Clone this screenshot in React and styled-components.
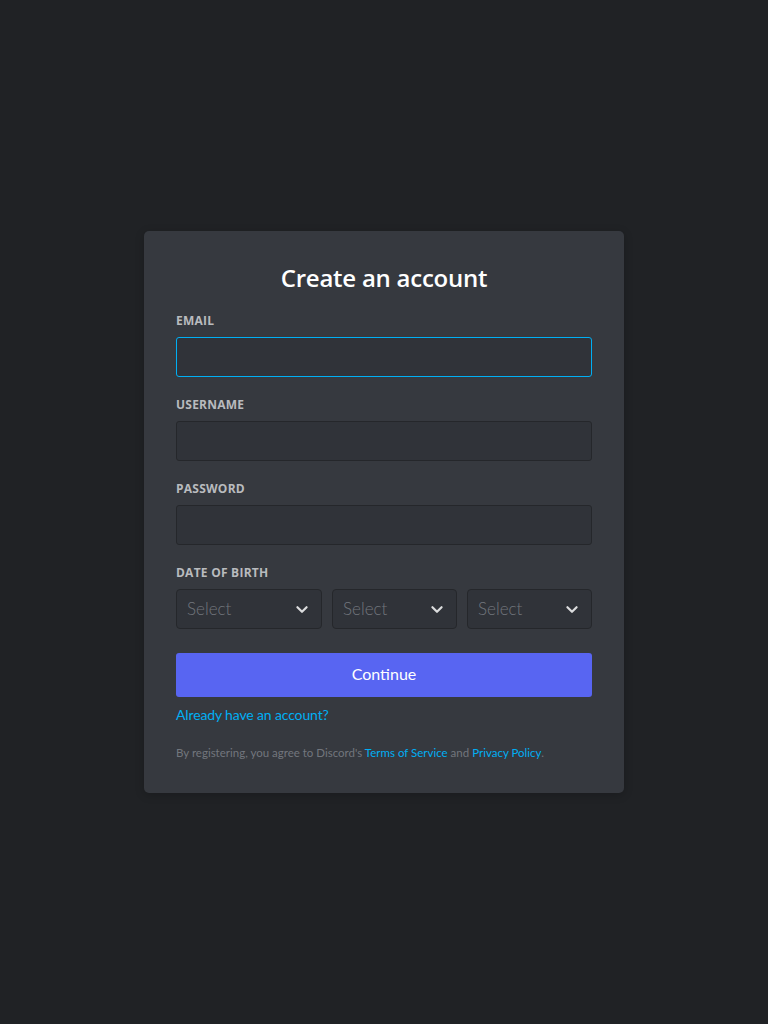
import React from "react";
import styled, { createGlobalStyle } from "styled-components";

const GlobalStyle = createGlobalStyle`
  html, body {
    margin: 0;
    padding: 0;
    background: #202225;
  }
  * {
    box-sizing: border-box;
  }
`;

const Page = styled.main`
  min-height: 100vh;
  display: flex;
  align-items: center;
  justify-content: center;
  background: #202225;
  font-family: Lato, "Open Sans", sans-serif;
`;

const Card = styled.form`
  width: 480px;
  padding: 32px;
  background: #36393f;
  border-radius: 5px;
  box-shadow: 0 2px 10px 0 rgba(0, 0, 0, 0.2);
  display: flex;
  flex-direction: column;
`;

const Title = styled.h1`
  margin: 0;
  font-size: 24px;
  line-height: 30px;
  font-weight: 600;
  color: #ffffff;
  text-align: center;
  font-family: "Open Sans", sans-serif;
  letter-spacing: -0.01em;
`;

const Field = styled.div`
  margin-top: 20px;
  display: flex;
  flex-direction: column;
`;

const Label = styled.label`
  margin-bottom: 8px;
  font-size: 12px;
  line-height: 16px;
  font-weight: 700;
  letter-spacing: 0.02em;
  text-transform: uppercase;
  color: #b9bbbe;
  font-family: "Open Sans", sans-serif;
`;

const Input = styled.input`
  height: 40px;
  width: 100%;
  padding: 10px;
  font-family: inherit;
  font-size: 16px;
  color: #dcddde;
  background: #303339;
  border: 1px solid ${({ $focused }) => ($focused ? "#00aff4" : "#25272b")};
  border-radius: 3px;
  outline: none;
`;

const DateRow = styled.div`
  display: grid;
  grid-template-columns: 146px 1fr 1fr;
  gap: 10px;
`;

const Select = styled.div`
  height: 40px;
  padding: 0 8px 2px 10px;
  display: flex;
  align-items: center;
  justify-content: space-between;
  background: #303339;
  border: 1px solid #25272b;
  border-radius: 4px;
  font-size: 17px;
  font-weight: 300;
  color: #72767d;
  cursor: pointer;
`;

const Chevron = styled.svg`
  width: 22px;
  height: 22px;
  margin-top: 2px;
  color: #dcddde;
`;

const Button = styled.button`
  margin-top: 24px;
  height: 44px;
  width: 100%;
  padding: 0 0 3px;
  border: none;
  border-radius: 3px;
  background: #5865f2;
  color: #ffffff;
  font-family: inherit;
  font-size: 16px;
  font-weight: 400;
  cursor: pointer;
`;

const LinkRow = styled.div`
  margin-top: 8px;
  font-size: 14px;
  line-height: 20px;
  letter-spacing: -0.01em;
`;

const Link = styled.a`
  color: #00aff4;
  text-decoration: none;
`;

const Terms = styled.p`
  margin: 20px 0 0;
  font-size: 11.5px;
  line-height: 16px;
  color: #72767d;
`;

const DateSelect = () => (
  <Select>
    <span>Select</span>
    <Chevron viewBox="0 0 24 24" fill="none">
      <path
        d="M7 10l5 5 5-5"
        stroke="currentColor"
        strokeWidth="2.4"
        strokeLinecap="round"
        strokeLinejoin="round"
      />
    </Chevron>
  </Select>
);

const App = () => {
  return (
    <Page>
      <GlobalStyle />
      <Card onSubmit={(e) => e.preventDefault()}>
        <Title>Create an account</Title>
        <Field>
          <Label>Email</Label>
          <Input type="email" $focused />
        </Field>
        <Field>
          <Label>Username</Label>
          <Input type="text" />
        </Field>
        <Field>
          <Label>Password</Label>
          <Input type="password" />
        </Field>
        <Field>
          <Label>Date of Birth</Label>
          <DateRow>
            <DateSelect />
            <DateSelect />
            <DateSelect />
          </DateRow>
        </Field>
        <Button type="submit">Continue</Button>
        <LinkRow>
          <Link href="#">Already have an account?</Link>
        </LinkRow>
        <Terms>
          By registering, you agree to Discord's{" "}
          <Link href="#">Terms of Service</Link> and{" "}
          <Link href="#">Privacy Policy</Link>.
        </Terms>
      </Card>
    </Page>
  );
};

export default App;
